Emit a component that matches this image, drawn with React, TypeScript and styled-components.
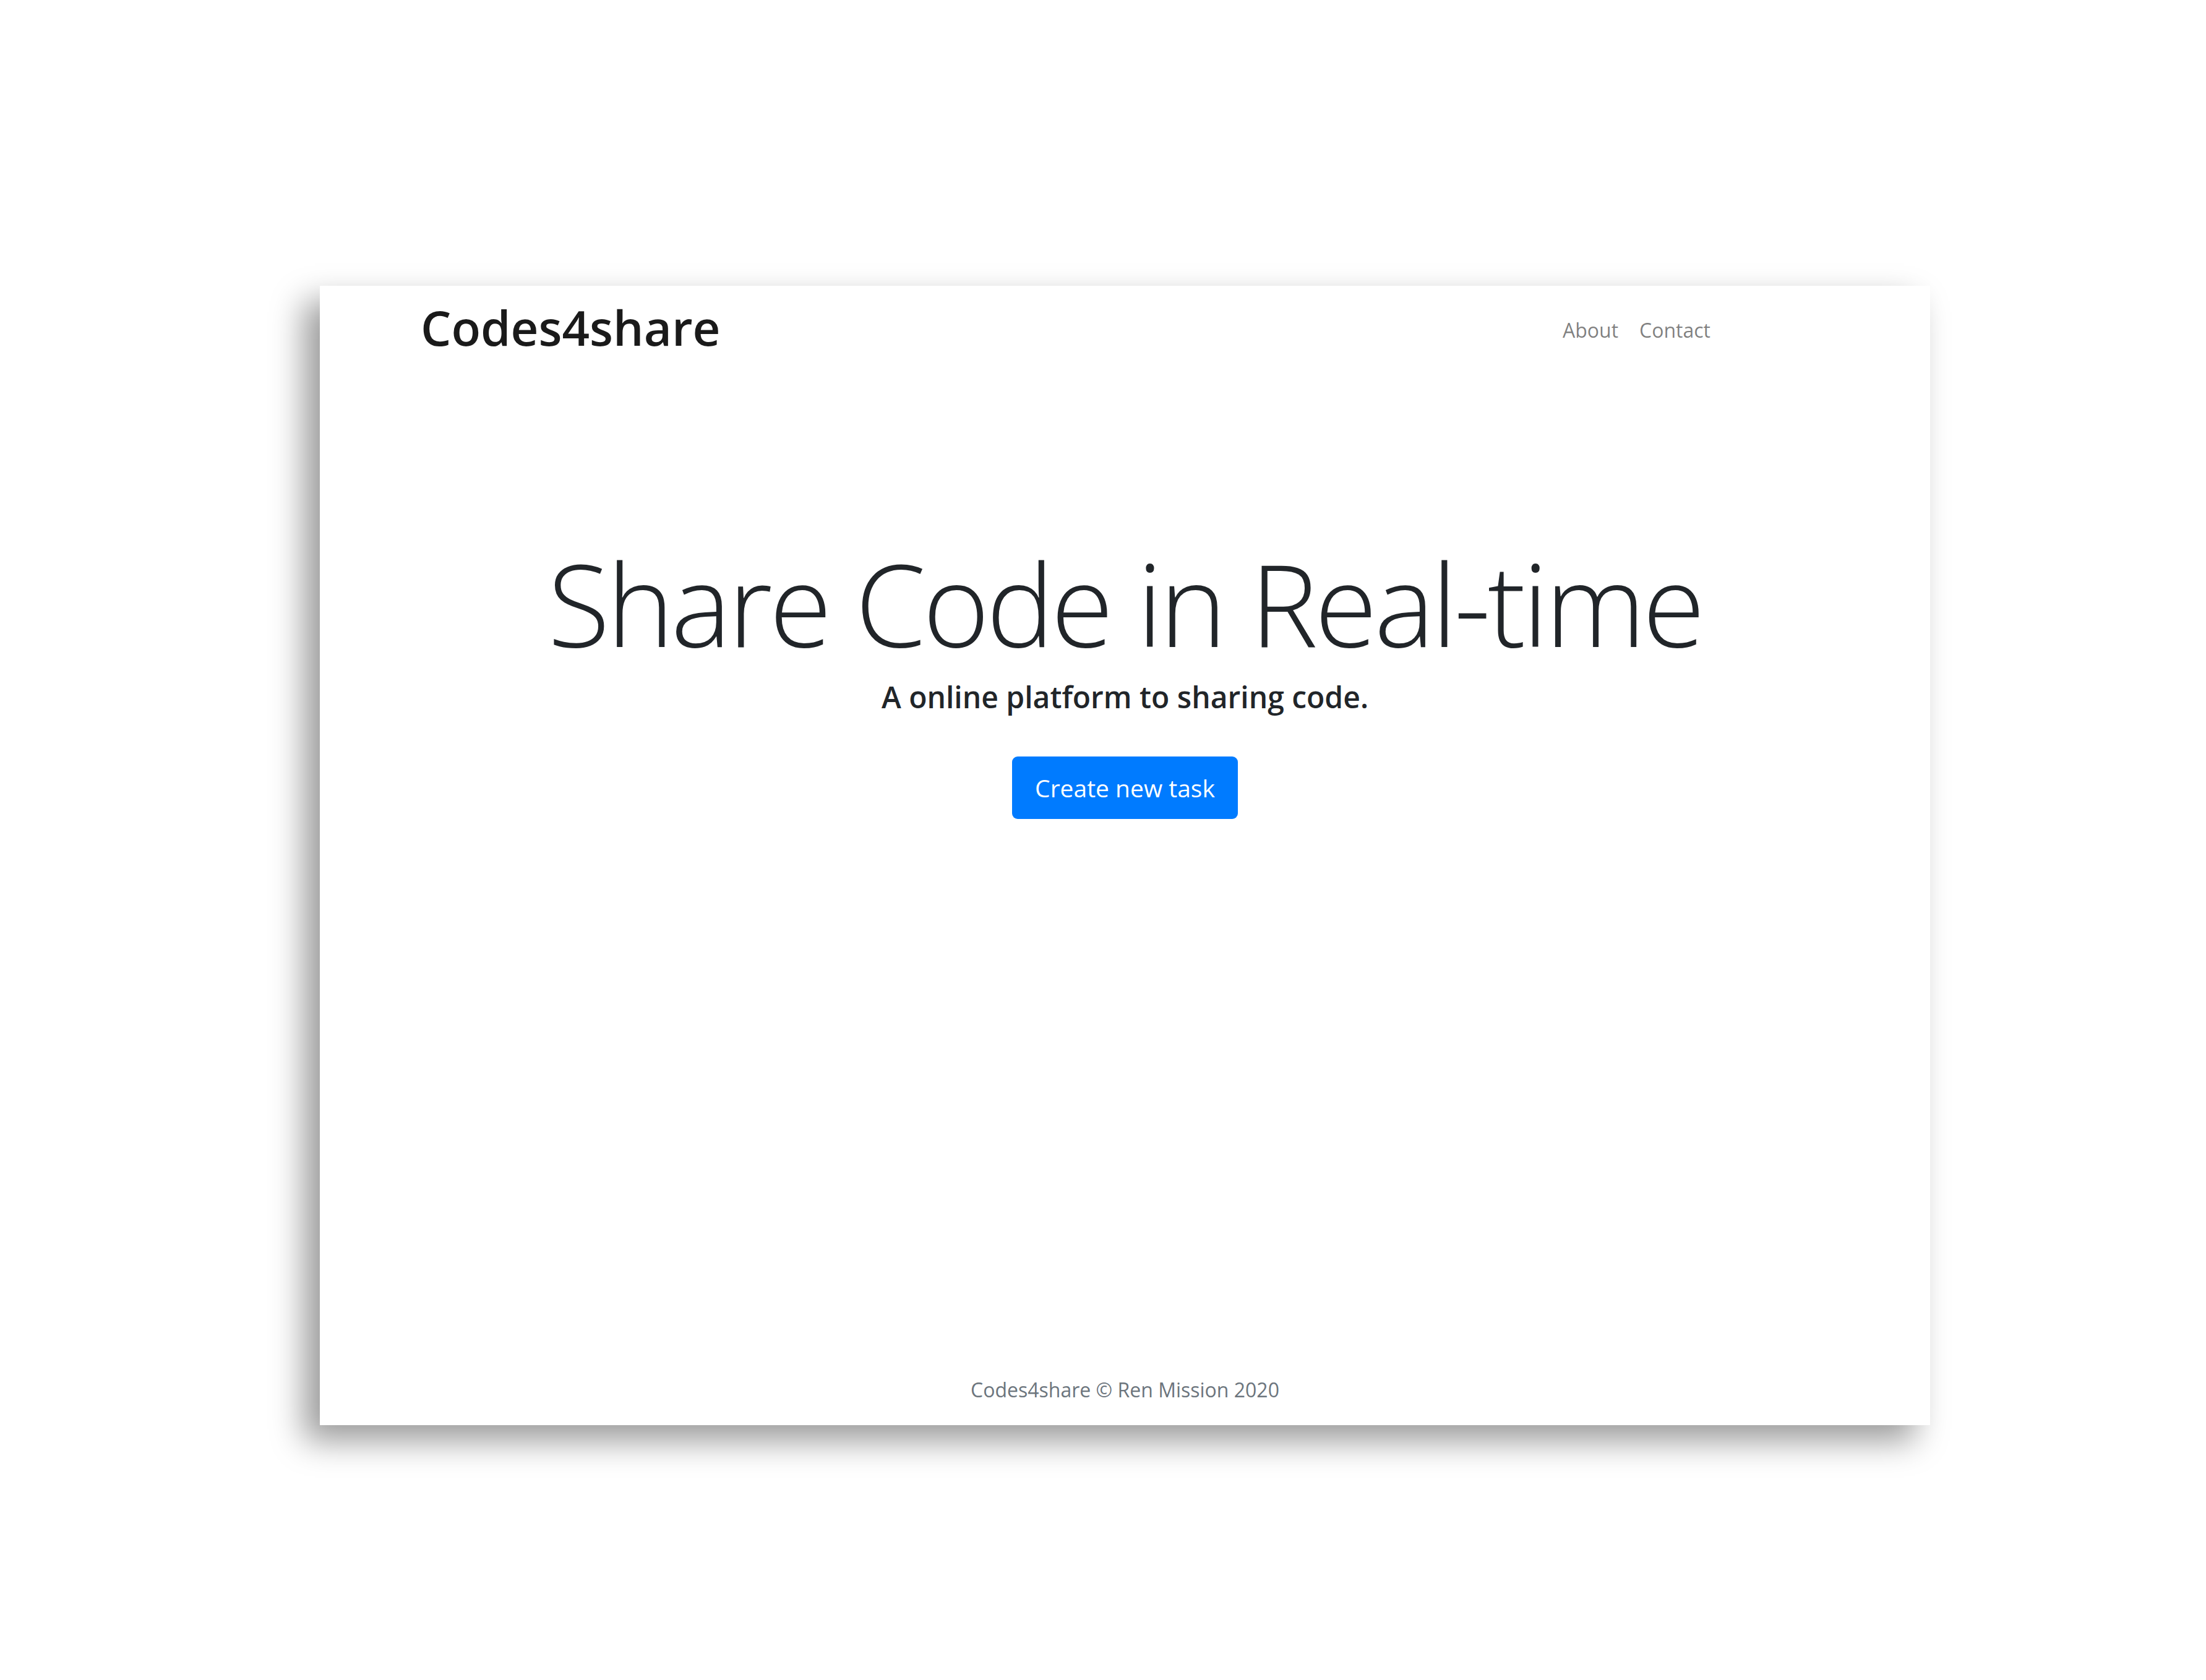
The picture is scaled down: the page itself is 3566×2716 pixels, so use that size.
import React from "react";
import styled, { createGlobalStyle } from "styled-components";

const Global = createGlobalStyle`
  html, body { margin: 0; padding: 0; background: #ffffff; }
  body { font-family: "Open Sans", "Noto Sans", sans-serif; color: #212529; }
`;

const Page = styled.div`
  width: 3566px;
  height: 2716px;
  box-sizing: border-box;
  padding: 462px 0 0 517px;
`;

const Card = styled.div`
  width: 2603px;
  height: 1842px;
  background: #ffffff;
  box-shadow: -25px 25px 50px rgba(0, 0, 0, 0.4);
  display: flex;
  flex-direction: column;
`;

const NavBar = styled.nav`
  display: flex;
  align-items: flex-start;
  justify-content: space-between;
  padding: 28px 355px 0 163px;
`;

const Brand = styled.a`
  font-family: "Open Sans", sans-serif;
  font-weight: 600;
  font-size: 78px;
  line-height: 1;
  color: #1a1a1a;
  text-decoration: none;
`;

const NavLinks = styled.div`
  display: flex;
  gap: 34px;
  margin-top: 28px;
`;

const NavLink = styled.a`
  font-family: "Open Sans", sans-serif;
  font-size: 32px;
  line-height: 1;
  color: rgba(0, 0, 0, 0.5);
  text-decoration: none;
`;

const Hero = styled.section`
  display: flex;
  flex-direction: column;
  align-items: center;
  padding-top: 315px;
`;

const Title = styled.h1`
  margin: 0;
  font-family: "Open Sans", sans-serif;
  font-weight: 300;
  font-size: 184px;
  line-height: 1;
  letter-spacing: -5px;
  color: #212529;
`;

const Lead = styled.p`
  margin: 36px 0 0;
  font-family: "Open Sans", sans-serif;
  font-weight: 600;
  font-size: 48px;
  line-height: 1;
  letter-spacing: 0;
  color: #212529;
`;

const Button = styled.button`
  margin-top: 72px;
  width: 365px;
  height: 101px;
  display: flex;
  align-items: center;
  justify-content: center;
  border: none;
  border-radius: 9px;
  background: #007bff;
  color: #ffffff;
  font-family: "Open Sans", sans-serif;
  font-size: 39px;
  line-height: 1;
  cursor: pointer;
`;

const Spacer = styled.div`
  flex: 1;
`;

const Footer = styled.footer`
  text-align: center;
  font-family: "Open Sans", sans-serif;
  font-size: 32px;
  line-height: 1;
  color: #6c757d;
  padding-bottom: 41px;
`;

export default function App() {
  return (
    <>
      <Global />
      <Page>
        <Card>
          <NavBar>
            <Brand href="#">Codes4share</Brand>
            <NavLinks>
              <NavLink href="#">About</NavLink>
              <NavLink href="#">Contact</NavLink>
            </NavLinks>
          </NavBar>
          <Hero>
            <Title>Share Code in Real-time</Title>
            <Lead>A online platform to sharing code.</Lead>
            <Button>Create new task</Button>
          </Hero>
          <Spacer />
          <Footer>Codes4share © Ren Mission 2020</Footer>
        </Card>
      </Page>
    </>
  );
}
